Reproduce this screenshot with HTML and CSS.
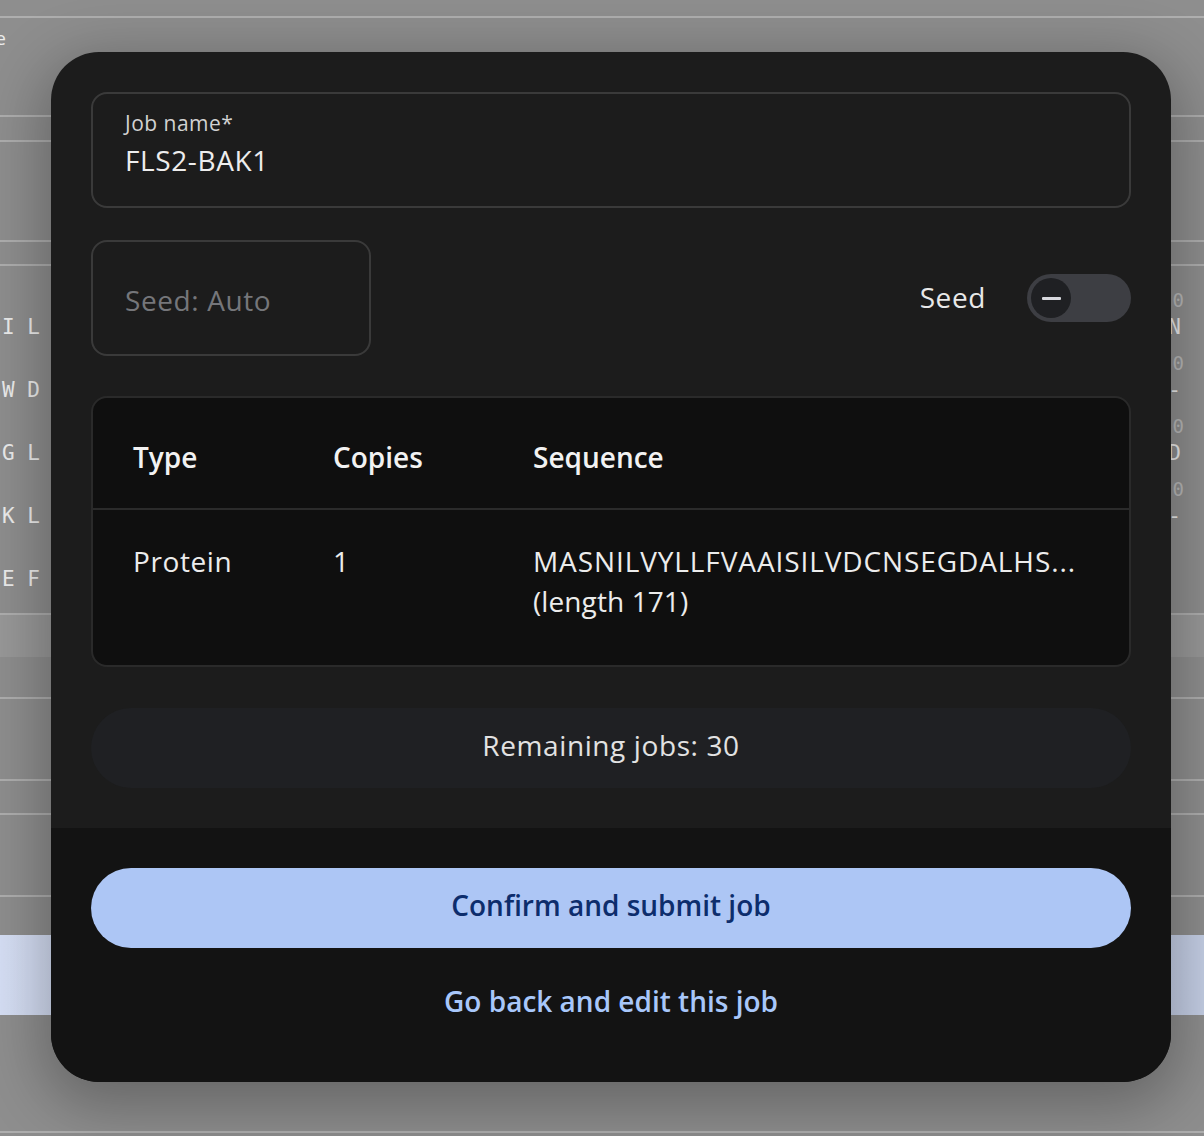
FILE: index.html
```html
<!DOCTYPE html>
<html>
<head>
<meta charset="utf-8">
<link rel="stylesheet" href="styles.css">
</head>
<body>
<div class="page">
  <div class="hr"></div>
  <div class="bg-title"><span>Sequence name</span></div>
  <div class="hr"></div>
  <div class="sp sp23"></div>
  <div class="hr"></div>
  <div class="sp sp98"></div>
  <div class="hr"></div>
  <div class="sp sp22"></div>
  <div class="hr"></div>
  <div class="seq">
    <div class="seq-row"><div class="num"><span></span><span>0</span></div><div class="res"><span>I L</span><span>N</span></div></div>
    <div class="seq-row"><div class="num"><span></span><span>0</span></div><div class="res"><span>W D</span><span>-</span></div></div>
    <div class="seq-row"><div class="num"><span></span><span>0</span></div><div class="res"><span>G L</span><span>D</span></div></div>
    <div class="seq-row"><div class="num"><span></span><span>0</span></div><div class="res"><span>K L</span><span>-</span></div></div>
    <div class="seq-row"><div class="num"><span></span><span></span></div><div class="res"><span>E F</span><span></span></div></div>
  </div>
  <div class="sp sp16"></div>
  <div class="hr"></div>
  <div class="band"></div>
  <div class="sp sp40"></div>
  <div class="hr"></div>
  <div class="sp sp80"></div>
  <div class="hr"></div>
  <div class="sp sp32"></div>
  <div class="hr"></div>
  <div class="sp sp80"></div>
  <div class="hr"></div>
  <div class="sp sp38"></div>
  <div class="blue"></div>
  <div class="sp sp116"></div>
  <div class="hr"></div>
</div>

<div class="modal">
  <div class="modal-body">
    <div class="field field-job">
      <div class="field-label">Job name*</div>
      <div class="field-value">FLS2-BAK1</div>
    </div>
    <div class="seed-row">
      <div class="field field-seed">
        <div class="placeholder">Seed: Auto</div>
      </div>
      <div class="seed-toggle">
        <span class="seed-label">Seed</span>
        <div class="switch"><div class="knob"><span class="minus"></span></div></div>
      </div>
    </div>
    <div class="table">
      <div class="trow thead">
        <div class="c c1">Type</div>
        <div class="c c2">Copies</div>
        <div class="c c3">Sequence</div>
      </div>
      <div class="trow tbody">
        <div class="c c1">Protein</div>
        <div class="c c2">1</div>
        <div class="c c3"><span class="seq-str">MASNILVYLLFVAAISILVDCNSEGDALHS...</span><br><span class="seq-len">(length 171)</span></div>
      </div>
    </div>
    <div class="remaining">Remaining jobs: 30</div>
  </div>
  <div class="modal-footer">
    <div class="btn-primary">Confirm and submit job</div>
    <div class="btn-link">Go back and edit this job</div>
  </div>
</div>
</body>
</html>
```

FILE: styles.css
```css
* { box-sizing: border-box; }
html, body { margin: 0; padding: 0; }
body {
  width: 1204px;
  height: 1136px;
  overflow: hidden;
  background: #8e8e8e;
  font-family: "Open Sans", "Lato", sans-serif;
  position: relative;
}
.page { padding-top: 16px; }
.hr { height: 2px; background: #aeaeae; }
.sp23 { height: 23px; }
.sp98 { height: 98px; }
.sp22 { height: 22px; }
.sp16 { height: 16px; }
.sp40 { height: 40px; }
.sp80 { height: 80px; }
.sp32 { height: 32px; }
.sp38 { height: 38px; }
.sp116 { height: 116px; }
.bg-title {
  height: 97px;
  padding-top: 8px;
  line-height: 24px;
  font-size: 19px;
  color: #ececec;
  overflow: hidden;
  white-space: nowrap;
}
.bg-title span { display: inline-block; margin-left: -136px; }
.seq {
  padding-top: 16px;
  font-family: "DejaVu Sans Mono", "Liberation Mono", monospace;
}
.seq-row { height: 63px; }
.num, .res {
  display: flex;
  justify-content: space-between;
  line-height: 36px;
  height: 36px;
}
.num { font-size: 19px; color: #b9b9b9; padding-right: 20px; }
.res { margin-top: -9px; font-size: 21px; color: #ececec; padding-left: 2px; padding-right: 23px; }
.band { height: 42px; background: #989898; }
.blue {
  height: 80px;
  background: linear-gradient(90deg, #d6dff5 0%, #c3cde6 50%, #c6d0e7 100%);
}

.modal {
  position: absolute;
  left: 51px;
  top: 52px;
  width: 1120px;
  height: 1030px;
  border-radius: 48px;
  overflow: hidden;
  background: #1c1c1c;
  box-shadow: 0 16px 60px 10px rgba(0,0,0,0.28);
  display: flex;
  flex-direction: column;
  letter-spacing: 0.6px;
}
.modal-body {
  padding: 40px 40px 40px;
  display: flex;
  flex-direction: column;
}
.field {
  border: 2px solid #3a3a3a;
  border-radius: 16px;
  height: 116px;
  padding: 15px 32px 0;
}
.field-label {
  font-size: 21px;
  line-height: 28px;
  color: #d2d2d2;
  letter-spacing: 0.5px;
}
.field-value {
  margin-top: 5px;
  font-size: 28px;
  line-height: 36px;
  color: #ededed;
}
.seed-row {
  margin-top: 32px;
  display: flex;
  align-items: center;
  justify-content: space-between;
}
.field-seed {
  width: 280px;
  display: flex;
  align-items: center;
  padding-top: 4px;
}
.placeholder {
  font-size: 28px;
  line-height: 36px;
  color: #75767a;
}
.seed-toggle {
  display: flex;
  align-items: center;
  gap: 41px;
}
.seed-label {
  font-size: 28px;
  color: #e8e8e8;
  line-height: 36px;
  padding-bottom: 2px;
}
.switch {
  width: 104px;
  height: 48px;
  border-radius: 24px;
  background: #3d3e43;
  display: flex;
  align-items: center;
  padding-left: 4px;
}
.knob {
  width: 40px;
  height: 40px;
  border-radius: 50%;
  background: #1f2023;
  display: flex;
  align-items: center;
  justify-content: center;
}
.minus {
  width: 19px;
  height: 3px;
  border-radius: 1px;
  background: #d7d8de;
}
.table {
  margin-top: 40px;
  border: 2px solid #2a2a2a;
  border-radius: 16px;
  background: #0f0f0f;
}
.trow { display: flex; padding-left: 40px; }
.thead {
  height: 112px;
  padding-top: 41px;
  border-bottom: 2px solid #2b2b2b;
}
.thead .c { font-size: 28px; line-height: 36px; color: #f2f2f2; font-weight: 600; letter-spacing: 0; }
.tbody {
  height: 155px;
  padding-top: 31px;
}
.tbody .c { font-size: 28px; line-height: 40px; color: #ececec; }
.seq-str { letter-spacing: 0.9px; }
.seq-len { letter-spacing: 0.1px; }
.c1, .c2 { width: 200px; }
.remaining {
  margin-top: 41px;
  height: 80px;
  border-radius: 40px;
  background: #1f2023;
  display: flex;
  align-items: center;
  justify-content: center;
  font-size: 28px;
  color: #e2e2e2;
  padding-bottom: 7px;
}
.modal-footer {
  flex: 1;
  background: #131313;
  padding: 40px 40px 50px;
  display: flex;
  flex-direction: column;
}
.btn-primary {
  height: 80px;
  border-radius: 40px;
  background: #adc6f5;
  color: #0d2d6c;
  font-size: 28px;
  font-weight: 600;
  letter-spacing: 0;
  display: flex;
  align-items: center;
  justify-content: center;
  padding-bottom: 7px;
}
.btn-link {
  margin-top: 24px;
  height: 62px;
  display: flex;
  align-items: center;
  justify-content: center;
  color: #a8c7fa;
  font-size: 28px;
  font-weight: 600;
  letter-spacing: 0;
  padding-bottom: 5px;
}
```
